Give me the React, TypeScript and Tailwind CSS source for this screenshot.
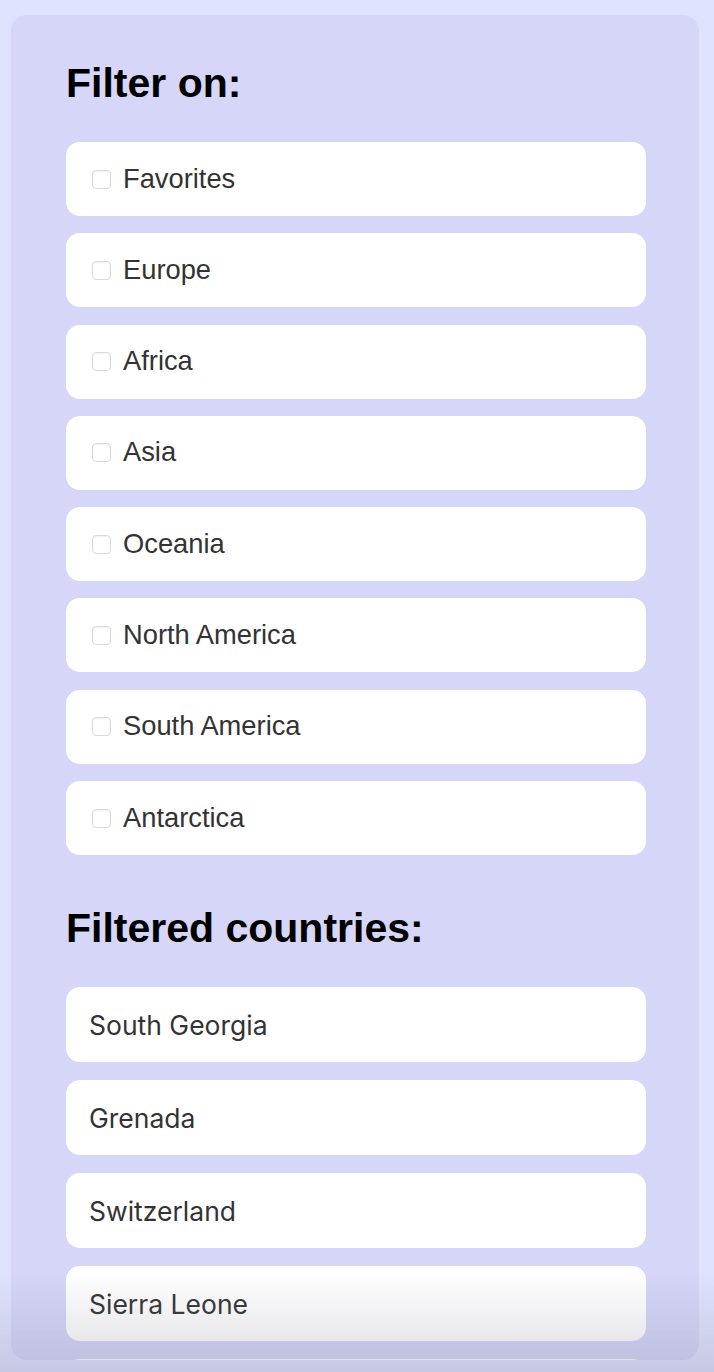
import { useState } from 'react'

const regions = ['Favorites', 'Europe', 'Africa', 'Asia', 'Oceania', 'North America', 'South America', 'Antarctica']

const countries = ['South Georgia', 'Grenada', 'Switzerland', 'Sierra Leone']

export default function App() {
  const [checked, setChecked] = useState<Record<string, boolean>>({})

  const toggle = (name: string) => {
    setChecked({ ...checked, [name]: !checked[name] })
  }

  return (
    <div className="min-h-[1372px] bg-[#e0e3ff] pt-[15px] pl-[11px]">
      {/* Main panel, list clipped at the bottom */}
      <div className="h-[1345px] w-[688px] overflow-hidden rounded-[16px] bg-[#d5d6f8] px-[55px] pt-[48px]">
        <h2 className="text-[41px] font-bold leading-[40px] text-black [font-family:'Liberation_Sans',Arial,sans-serif]">
          Filter on:
        </h2>

        <div className="mt-[39px] flex w-[580px] flex-col gap-[17.3px]">
          {regions.map((region) => (
            <label
              key={region}
              className="flex h-[74px] cursor-pointer items-center gap-[12px] rounded-[14px] bg-white pl-[26px]"
            >
              <input
                type="checkbox"
                checked={!!checked[region]}
                onChange={() => toggle(region)}
                className="h-[19px] w-[19px] appearance-none rounded-[4px] border border-[#d9d9d9] bg-white shadow-[inset_0_1px_2px_rgba(0,0,0,0.06)] checked:border-[#4c6ef5] checked:bg-[#4c6ef5]"
              />
              <span className="text-[27.3px] text-[#333] [font-family:'Liberation_Sans',Arial,sans-serif]">
                {region}
              </span>
            </label>
          ))}
        </div>

        <h2 className="mt-[53px] text-[41px] font-bold leading-[40px] text-black [font-family:'Liberation_Sans',Arial,sans-serif]">
          Filtered countries:
        </h2>

        <div className="mt-[39px] flex w-[580px] flex-col gap-[18px]">
          {countries.map((country) => (
            <div
              key={country}
              className="flex h-[75px] shrink-0 items-center rounded-[14px] bg-white pl-[23px] pt-[3px] text-[26.5px] text-[#333] [font-family:Inter,sans-serif]"
            >
              {country}
            </div>
          ))}
          {/* next row, scrolled out of view */}
          <div className="h-[75px] shrink-0 rounded-[14px] bg-white" />
        </div>
      </div>

      {/* Fade at the bottom of the viewport */}
      <div className="pointer-events-none fixed inset-x-0 bottom-0 h-[100px] bg-gradient-to-b from-transparent to-[rgba(125,125,150,0.26)]" />
    </div>
  )
}
